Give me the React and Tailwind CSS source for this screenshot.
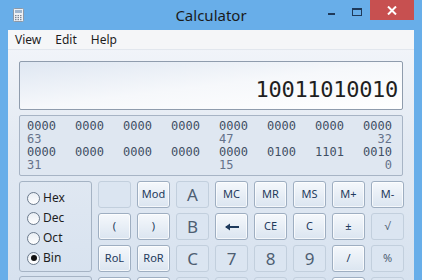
import React from 'react'

const ui = { fontFamily: '"Noto Sans", "Open Sans", sans-serif' }
const mono = { fontFamily: '"DejaVu Sans Mono", "Liberation Mono", monospace' }

const Arrow = () => (
  <svg width="14" height="8" viewBox="0 0 14 8">
    <path d="M1 4h13" stroke="#1e3a5c" strokeWidth="2" />
    <path d="M0 4l5-3.5v7z" fill="#1e3a5c" />
  </svg>
)

// e = enabled, d = disabled; big = digit/letter keys
// last row is only peeking in at the bottom edge, so no labels there
const rows = [
  [['', 'd'], ['Mod', 'e'], ['A', 'd', 1], ['MC', 'e'], ['MR', 'e'], ['MS', 'e'], ['M+', 'e'], ['M-', 'e']],
  [['(', 'e'], [')', 'e'], ['B', 'd', 1], ['back', 'e'], ['CE', 'e'], ['C', 'e'], ['±', 'e'], ['√', 'd']],
  [['RoL', 'e'], ['RoR', 'e'], ['C', 'd', 1], ['7', 'd', 1], ['8', 'd', 1], ['9', 'd', 1], ['/', 'e'], ['%', 'd']],
  [['', 'e'], ['', 'e'], ['', 'd'], ['', 'd'], ['', 'd'], ['', 'd'], ['', 'e'], ['', 'd']],
]

const Key = ({ label, state, big }) => {
  const base = 'flex items-center justify-center rounded-[3px] border'
  const look =
    state === 'e'
      ? 'bg-gradient-to-b from-[#f5f8fc] to-[#dbe5f0] border-[#9eaec1] shadow-[inset_0_0_0_1px_rgba(255,255,255,0.7)] text-[#1e3a5c]'
      : 'bg-[#dbe5f1] border-[#c2cfdd] text-[#4e5e72]'
  const size = big ? 'text-[17px]' : 'text-[11px]'
  return (
    <div className={`${base} ${look} ${size}`} style={ui}>
      {label === 'back' ? <Arrow /> : label}
    </div>
  )
}

const Radio = ({ label, checked }) => (
  <div className="flex items-center h-[20px] gap-[3px]">
    <div className="w-[13px] h-[13px] rounded-full border border-[#6b7a8c] bg-gradient-to-b from-[#e9eef4] to-white flex items-center justify-center">
      {checked && <div className="w-[6px] h-[6px] rounded-full bg-[#111]" />}
    </div>
    <span className="text-[12px] text-[#1e1e1e]" style={ui}>{label}</span>
  </div>
)

const top = ['0000', '0000', '0000', '0000', '0000', '0000', '0000', '0000']
const bottom = ['0000', '0000', '0000', '0000', '0000', '0100', '1101', '0010']

const BitRow = ({ groups }) => (
  <div className="grid grid-cols-[repeat(7,48px)_29px] text-[#3f4f64]">
    {groups.map((g, i) => <span key={i}>{g}</span>)}
  </div>
)

const LabelRow = ({ a, b, c }) => (
  <div className="grid grid-cols-[repeat(7,48px)_29px] text-[#65728a]">
    <span>{a}</span><span /><span /><span /><span>{b}</span><span /><span /><span className="text-right">{c}</span>
  </div>
)

const App = () => {
  return (
    <div className="w-[422px] h-[280px] bg-[#68aee9] flex flex-col overflow-hidden">
      {/* title bar */}
      <div className="h-[30px] grid grid-cols-[1fr_auto_1fr] shrink-0">
        <div className="pl-[13px] pt-[8px]">
          <svg width="11" height="14" viewBox="0 0 11 14">
            <rect x="0.5" y="0.5" width="10" height="13" rx="1" fill="#eef1f5" stroke="#8d98a6" />
            <rect x="2" y="2" width="7" height="3" fill="#9fb6cf" />
            <g fill="#7d8795">
              <rect x="2" y="7" width="1.5" height="1.2" /><rect x="4.5" y="7" width="1.5" height="1.2" /><rect x="7" y="7" width="1.5" height="1.2" />
              <rect x="2" y="9" width="1.5" height="1.2" /><rect x="4.5" y="9" width="1.5" height="1.2" /><rect x="7" y="9" width="1.5" height="1.2" />
              <rect x="2" y="11" width="1.5" height="1.2" /><rect x="4.5" y="11" width="1.5" height="1.2" /><rect x="7" y="11" width="1.5" height="1.2" />
            </g>
          </svg>
        </div>
        <div className="text-[15px] text-[#1b1b1b] pt-[5px] leading-[20px]" style={ui}>Calculator</div>
        <div className="flex justify-end pr-[8px]">
          <div className="w-[26px] h-[20px] flex justify-center pt-[13px]">
            <div className="w-[7px] h-[2px] bg-[#1f3a5a]" />
          </div>
          <div className="w-[26px] h-[20px] flex justify-center pt-[8px]">
            <div className="w-[10px] h-[8px] border border-[#1f3a5a] border-t-2" />
          </div>
          <div className="w-[44px] h-[20px] bg-[#c75050] flex items-center justify-center">
            <svg width="10" height="9" viewBox="0 0 10 9">
              <path d="M1 0.5l8 8M9 0.5l-8 8" stroke="#fff" strokeWidth="2" />
            </svg>
          </div>
        </div>
      </div>

      {/* client area */}
      <div className="mx-[8px] flex-1 flex flex-col bg-gradient-to-b from-[#f4f6fa] via-[#e3eaf3] via-45% to-[#d7e2ef] overflow-hidden">
        <div className="h-[20px] shrink-0 flex items-center bg-[#f5f6f8] border-b border-[#e2e7ee] text-[12px] text-[#1e1e1e] pt-[1px]" style={ui}>
          <span className="px-[7px]">View</span>
          <span className="px-[7px]">Edit</span>
          <span className="px-[7px]">Help</span>
        </div>

        <div className="px-[11px] pt-[11px] flex flex-col">
          <div className="h-[49px] rounded-[2px] border border-[#8f9cad] bg-gradient-to-br from-[#dfe7f2] via-[#f6f8fb] to-white flex items-end justify-end pr-[4px] pb-[6px]">
            <span className="text-[22px] leading-[26px] text-[#1f1f1f] tracking-[-0.3px]" style={mono}>10011010010</span>
          </div>

          <div className="mt-[5px] h-[61px] rounded-[2px] border border-[#a7b4c5] bg-[#dfe7f1] pl-[7px] pt-[4px] text-[12px] leading-[13px]" style={mono}>
            <BitRow groups={top} />
            <LabelRow a="63" b="47" c="32" />
            <BitRow groups={bottom} />
            <LabelRow a="31" b="15" c="0" />
          </div>

          <div className="mt-[5px] flex gap-[6px]">
            <div className="w-[73px] flex flex-col gap-[4px] shrink-0">
              <div className="h-[91px] rounded-[3px] border border-[#a5b3c4] pl-[7px] pt-[6px]">
                <Radio label="Hex" />
                <Radio label="Dec" />
                <Radio label="Oct" />
                <Radio label="Bin" checked />
              </div>
              <div className="h-[91px] rounded-[3px] border border-[#a5b3c4]" />
            </div>
            <div className="grid grid-cols-[repeat(8,33px)] grid-rows-[27px_27px_27px_27px] gap-x-[6px] gap-y-[5px]">
              {rows.flat().map(([l, s, big], i) => (
                <Key key={i} label={l} state={s} big={big} />
              ))}
            </div>
          </div>
        </div>
      </div>
    </div>
  )
}

export default App
